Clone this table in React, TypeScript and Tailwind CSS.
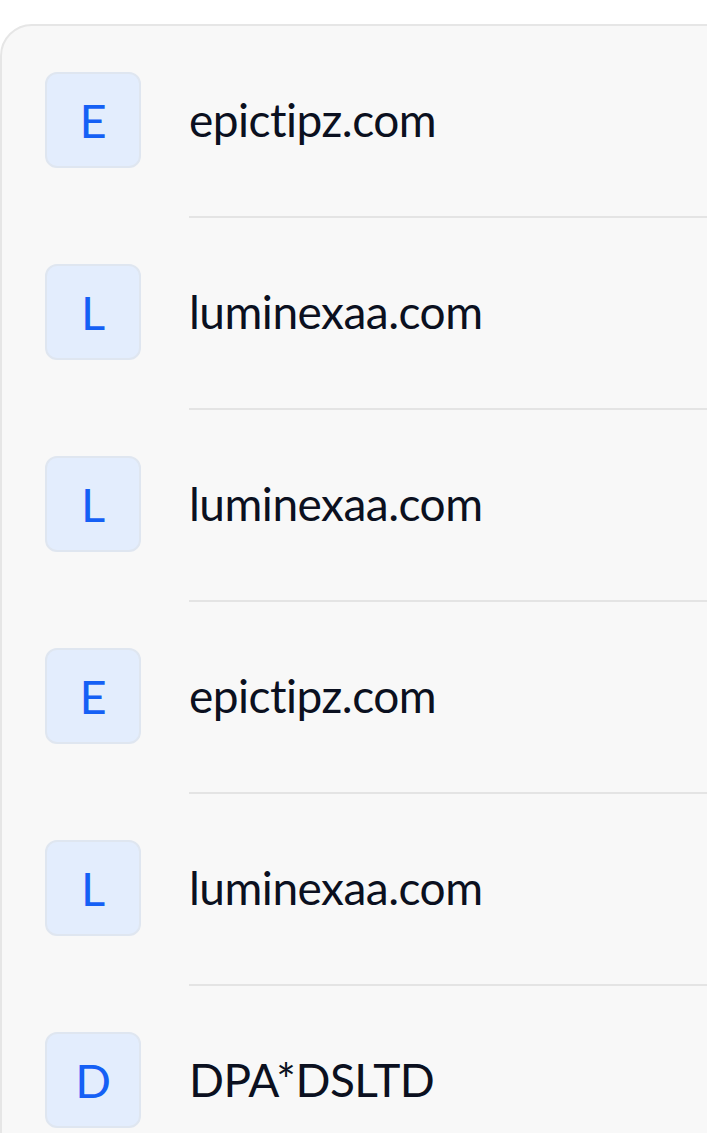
const rows = [
  { letter: "E", name: "epictipz.com" },
  { letter: "L", name: "luminexaa.com" },
  { letter: "L", name: "luminexaa.com" },
  { letter: "E", name: "epictipz.com" },
  { letter: "L", name: "luminexaa.com" },
  { letter: "D", name: "DPA*DSLTD" },
];

export default function App() {
  return (
    <div className="h-[1133px] overflow-hidden bg-white pt-6 font-['Lato',sans-serif]">
      <div className="-mr-10 rounded-tl-[32px] rounded-tr-[32px] border-2 border-[#e6e6e6] bg-[#f8f8f8]">
        {rows.map((r, i) => (
          <div key={i} className="flex h-[192px] items-stretch pl-[43px]">
            <div className="flex h-[188px] items-center">
              <div className="flex h-[96px] w-[96px] items-center justify-center rounded-[12px] border-2 border-[#dfe6f0] bg-[#e3edfd] text-[47px] text-[#1560f5]">
                {r.letter}
              </div>
            </div>
            <div className="ml-[48px] flex flex-1 items-center border-b-2 border-[#e4e4e4] pb-[4px] text-[46px] tracking-[-0.5px] text-[#0b1020]">
              {r.name}
            </div>
          </div>
        ))}
      </div>
    </div>
  );
}
